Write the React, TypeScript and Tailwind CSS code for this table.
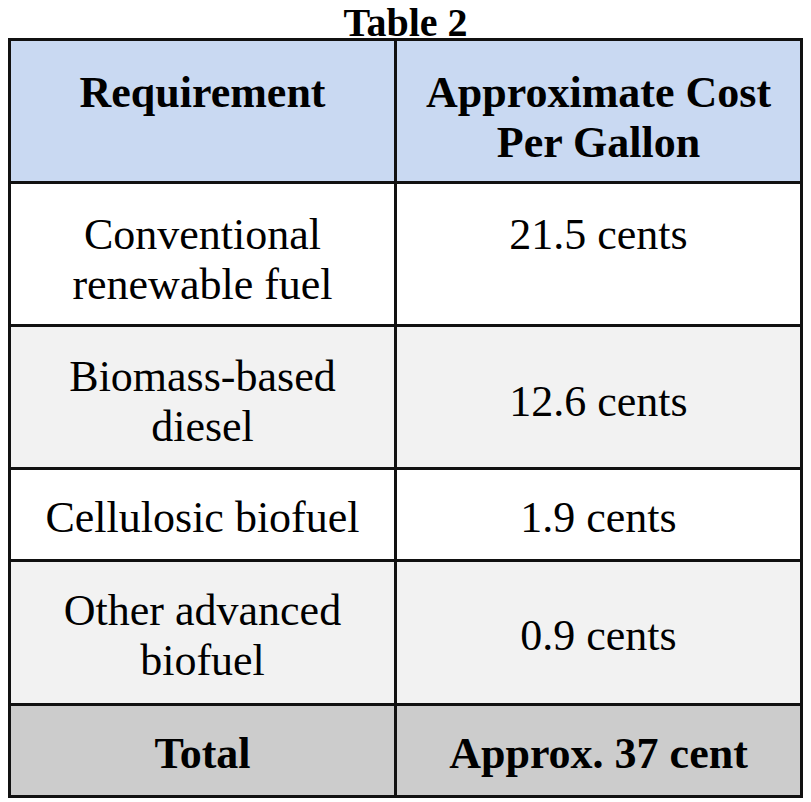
import React from "react";

type Row = {
  label: string[];
  cost: string;
  bg: string;
  align: string;
  height: string;
  bold?: boolean;
};

const rows: Row[] = [
  { label: ["Requirement"], cost: "Approximate Cost|Per Gallon", bg: "bg-[#c9d9f2]", align: "items-start pt-[27px]", height: "h-[140px]", bold: true },
  { label: ["Conventional", "renewable fuel"], cost: "21.5 cents", bg: "bg-white", align: "items-start pt-[26px]", height: "h-[140px]" },
  { label: ["Biomass-based", "diesel"], cost: "12.6 cents", bg: "bg-[#f2f2f2]", align: "items-center pt-[10px]", height: "h-[140px]" },
  { label: ["Cellulosic biofuel"], cost: "1.9 cents", bg: "bg-white", align: "items-center pt-[6px]", height: "h-[89px]" },
  { label: ["Other advanced", "biofuel"], cost: "0.9 cents", bg: "bg-[#f2f2f2]", align: "items-center pt-[6px]", height: "h-[141px]" },
  { label: ["Total"], cost: "Approx. 37 cent", bg: "bg-[#cccccc]", align: "items-center pt-[6px]", height: "h-[89px]", bold: true },
];

function Cell({ lines, row }: { lines: string[]; row: Row }) {
  return (
    <div className={`${row.bg} ${row.height} ${row.align} flex justify-center`}>
      <div className={`text-center text-[44px] leading-[50px] ${row.bold ? "font-bold" : ""}`}>
        {lines.map((l) => (
          <div key={l}>{l}</div>
        ))}
      </div>
    </div>
  );
}

export default function App() {
  return (
    <div className="bg-white w-[811px] h-[802px] px-2 text-black" style={{ fontFamily: '"Liberation Serif", "Times New Roman", serif' }}>
      <h1 className="h-[38px] text-center text-[40px] leading-[45px] font-bold">Table 2</h1>
      <div className="relative grid grid-cols-[383px_403px] gap-[3px] bg-[#111] p-[3px] w-[795px]">
        {rows.map((row) => (
          <React.Fragment key={row.cost}>
            <Cell lines={row.label} row={row} />
            <Cell lines={row.cost.split("|")} row={row} />
          </React.Fragment>
        ))}
      </div>
    </div>
  );
}
